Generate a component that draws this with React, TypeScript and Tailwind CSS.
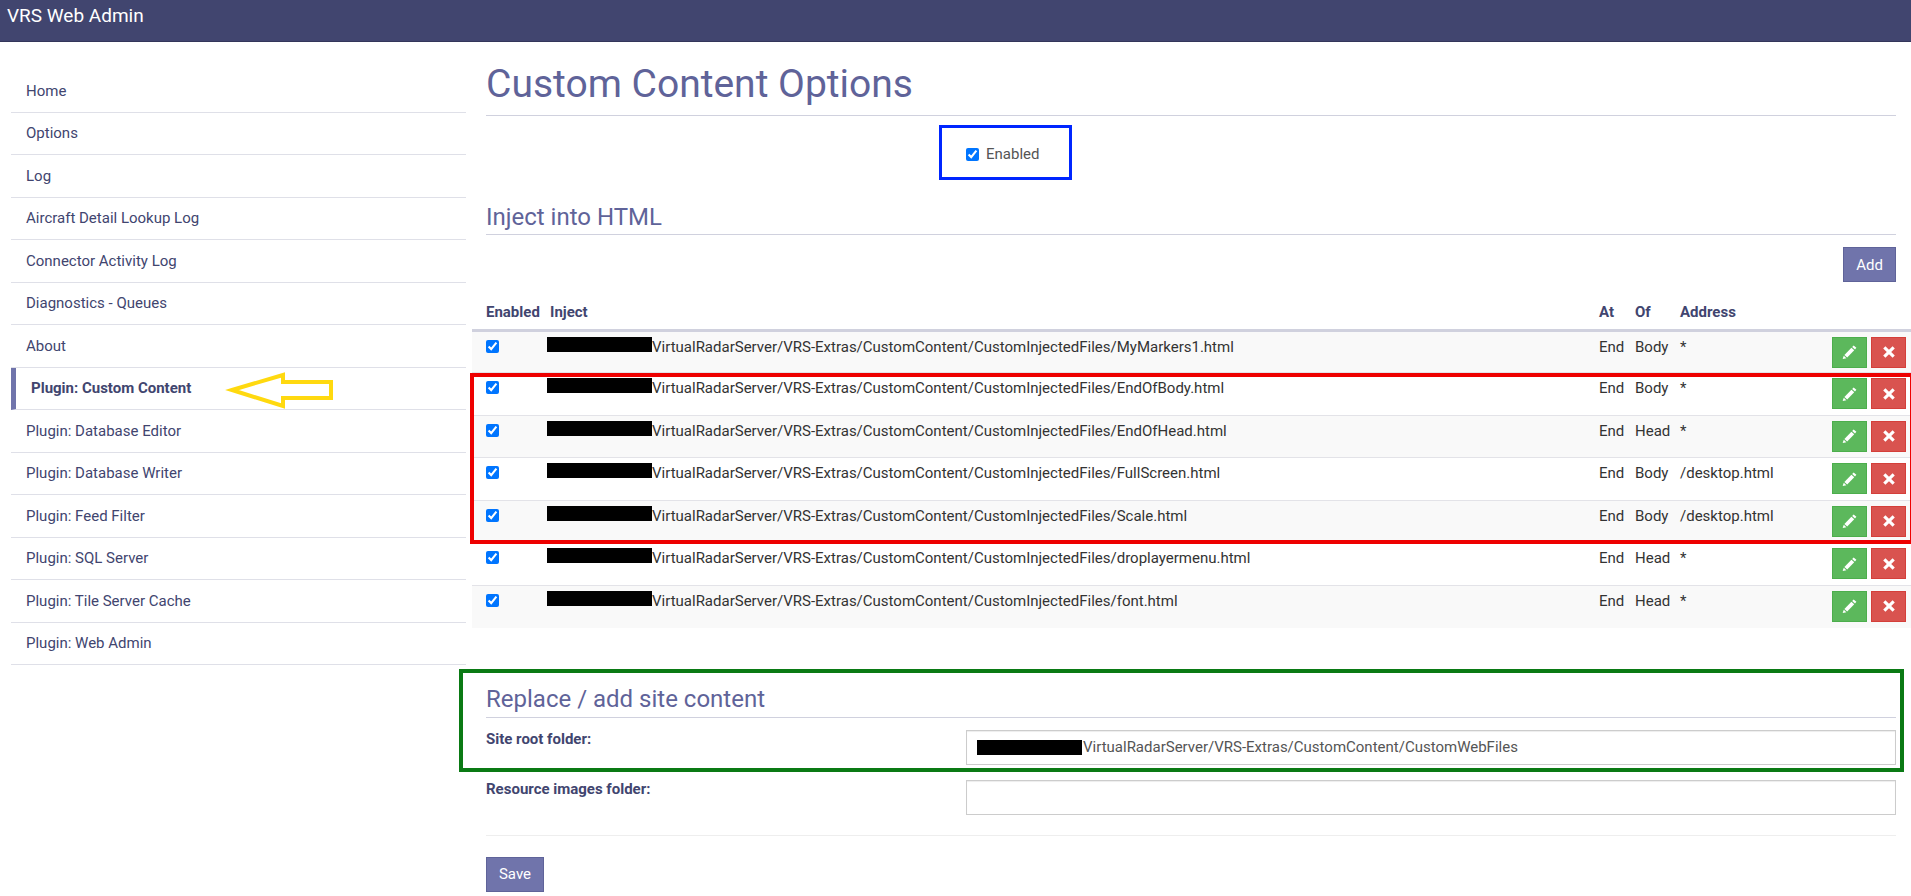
const navItems = [
  'Home',
  'Options',
  'Log',
  'Aircraft Detail Lookup Log',
  'Connector Activity Log',
  'Diagnostics - Queues',
  'About',
  'Plugin: Custom Content',
  'Plugin: Database Editor',
  'Plugin: Database Writer',
  'Plugin: Feed Filter',
  'Plugin: SQL Server',
  'Plugin: Tile Server Cache',
  'Plugin: Web Admin',
];

const injections = [
  { file: 'MyMarkers1.html', of: 'Body', address: '*' },
  { file: 'EndOfBody.html', of: 'Body', address: '*' },
  { file: 'EndOfHead.html', of: 'Head', address: '*' },
  { file: 'FullScreen.html', of: 'Body', address: '/desktop.html' },
  { file: 'Scale.html', of: 'Body', address: '/desktop.html' },
  { file: 'droplayermenu.html', of: 'Head', address: '*' },
  { file: 'font.html', of: 'Head', address: '*' },
];

function PencilIcon() {
  return (
    <svg width="15" height="14" viewBox="0 0 15 14" fill="white">
      <path d="M11.6 0.4 14.4 2.8 13 4.4 10.2 2Z" />
      <path d="M9.4 2.8 12.2 5.2 5.2 12.4 2.4 10Z" />
      <path d="M1.8 10.8 4.4 13.2 0.6 14Z" />
    </svg>
  );
}

function RemoveIcon() {
  return (
    <svg width="12" height="12" viewBox="0 0 12 12" fill="white">
      <path d="M2.4 0.2 6 3.8 9.6 0.2 11.8 2.4 8.2 6 11.8 9.6 9.6 11.8 6 8.2 2.4 11.8 0.2 9.6 3.8 6 0.2 2.4Z" />
    </svg>
  );
}

export default function App() {
  return (
    <div className="relative h-[896px] overflow-hidden bg-white font-['Roboto',sans-serif] text-[15px] leading-[20px] text-[#333]">
      {/* Navbar */}
      <div className="h-[42px] border-b border-[#33365a] bg-[#41456f] pl-[7px] pt-[3px] text-[19px] leading-[26px] text-white">
        VRS Web Admin
      </div>

      <div className="flex">
        {/* Sidebar */}
        <ul className="ml-[11px] mt-[28px] w-[455px] shrink-0 text-[#41456f]">
          {navItems.map((item) =>
            item === 'Plugin: Custom Content' ? (
              <li key={item} className="h-[42.5px] border-b border-[#dfe0e8] border-l-[5px] border-l-[#7074ab] pl-[15px] pt-[10.5px] font-bold">
                {item}
              </li>
            ) : (
              <li key={item} className="h-[42.5px] border-b border-[#dfe0e8] pl-[15px] pt-[10.5px]">
                {item}
              </li>
            ),
          )}
        </ul>

        {/* Main */}
        <div className="ml-[20px] w-[1410px] shrink-0">
          <h1 className="mt-[19px] h-[55px] border-b border-[#d0d1de] text-[39px] leading-[46px] text-[#5f6399]">
            Custom Content Options
          </h1>

          <div className="ml-[480px] mt-[31px] flex h-[14px] items-center gap-[7px] text-[#555]">
            <input type="checkbox" defaultChecked className="m-0 h-[13px] w-[13px]" />
            <span>Enabled</span>
          </div>

          <h2 className="mt-[42px] h-[32px] border-b border-[#d0d1de] text-[24px] leading-[28px] text-[#5f6399]">
            Inject into HTML
          </h2>

          <div className="mt-[12px] flex justify-end">
            <button className="h-[35px] w-[53px] border border-[#5f6399] bg-[#7074ab] text-white">Add</button>
          </div>

          {/* Injected files */}
          <table className="-ml-[14px] mt-[19px] w-[1439px] table-fixed border-collapse">
            <thead>
              <tr className="h-[29px] border-b-[3px] border-[#d0d1de] text-left font-bold text-[#41456f]">
                <th className="w-[78px] pb-[7px] pl-[14px] align-bottom">Enabled</th>
                <th className="pb-[7px] align-bottom">Inject</th>
                <th className="w-[36px] pb-[7px] align-bottom">At</th>
                <th className="w-[45px] pb-[7px] align-bottom">Of</th>
                <th className="w-[152px] pb-[7px] align-bottom">Address</th>
                <th className="w-[79px]"></th>
              </tr>
            </thead>
            <tbody>
              {injections.map((row, index) => (
                <tr key={row.file} className={`h-[42.5px] ${index < injections.length - 1 ? 'border-b border-[#e3e3e8]' : ''} ${index % 2 === 0 ? 'bg-[#f9f9f9]' : 'bg-white'}`}>
                  <td className="pl-[14px] pt-[8px] align-top">
                    <input type="checkbox" defaultChecked className="m-0 block h-[13px] w-[13px]" />
                  </td>
                  <td className="pt-[5px] align-top">
                    <span className="-ml-[3px] inline-block h-[15px] w-[105px] bg-black align-[0px]"></span>
                    VirtualRadarServer/VRS-Extras/CustomContent/CustomInjectedFiles/{row.file}
                  </td>
                  <td className="pt-[5px] align-top">End</td>
                  <td className="pt-[5px] align-top">{row.of}</td>
                  <td className="pt-[5px] align-top">{row.address}</td>
                  <td className="pt-[5px] align-top">
                    <div className="flex gap-[4px]">
                      <button className="flex h-[31px] w-[35px] items-center justify-center border border-[#4cae4c] bg-[#5cb85c]">
                        <PencilIcon />
                      </button>
                      <button className="flex h-[31px] w-[35px] items-center justify-center border border-[#d43f3a] bg-[#d9534f]">
                        <RemoveIcon />
                      </button>
                    </div>
                  </td>
                </tr>
              ))}
            </tbody>
          </table>

          <h2 className="mt-[57px] h-[33px] border-b border-[#d0d1de] text-[24px] leading-[28px] text-[#5f6399]">
            Replace / add site content
          </h2>

          <div className="mt-[12px] flex h-[35px] font-bold leading-[18px] text-[#41456f]">
            <label className="w-[480px]">Site root folder:</label>
            <div className="flex flex-1 items-center border border-[#ccc] pl-[10px] font-normal text-[#555] shadow-[inset_0_1px_1px_rgba(0,0,0,0.075)]">
              <span className="mr-[1px] h-[15px] w-[105px] bg-black"></span>
              VirtualRadarServer/VRS-Extras/CustomContent/CustomWebFiles
            </div>
          </div>

          <div className="mt-[15px] flex h-[35px] font-bold leading-[18px] text-[#41456f]">
            <label className="w-[480px]">Resource images folder:</label>
            <input className="flex-1 border border-[#ccc] shadow-[inset_0_1px_1px_rgba(0,0,0,0.075)]" />
          </div>

          <div className="mt-[20px] border-t border-[#eee]"></div>

          <button className="mt-[21px] h-[35px] w-[58px] border border-[#5f6399] bg-[#7074ab] text-white">Save</button>
        </div>
      </div>

      {/* Annotations drawn over the screenshot */}
      <svg className="absolute left-[225px] top-[370px]" width="110" height="40" viewBox="0 0 110 40" fill="none">
        <path d="M7 20 58 5V12H106V28H58V36Z" stroke="#ffd90f" strokeWidth="4" />
      </svg>
      <div className="absolute left-[939px] top-[125px] h-[55px] w-[133px] border-[3px] border-[#0026ff]"></div>
      <div className="absolute left-[470px] top-[373px] h-[171px] w-[1441px] border-[4px] border-r border-[#ee0000]"></div>
      <div className="absolute left-[459px] top-[669px] h-[103px] w-[1445px] border-[4px] border-[#0a7a14]"></div>
    </div>
  );
}
